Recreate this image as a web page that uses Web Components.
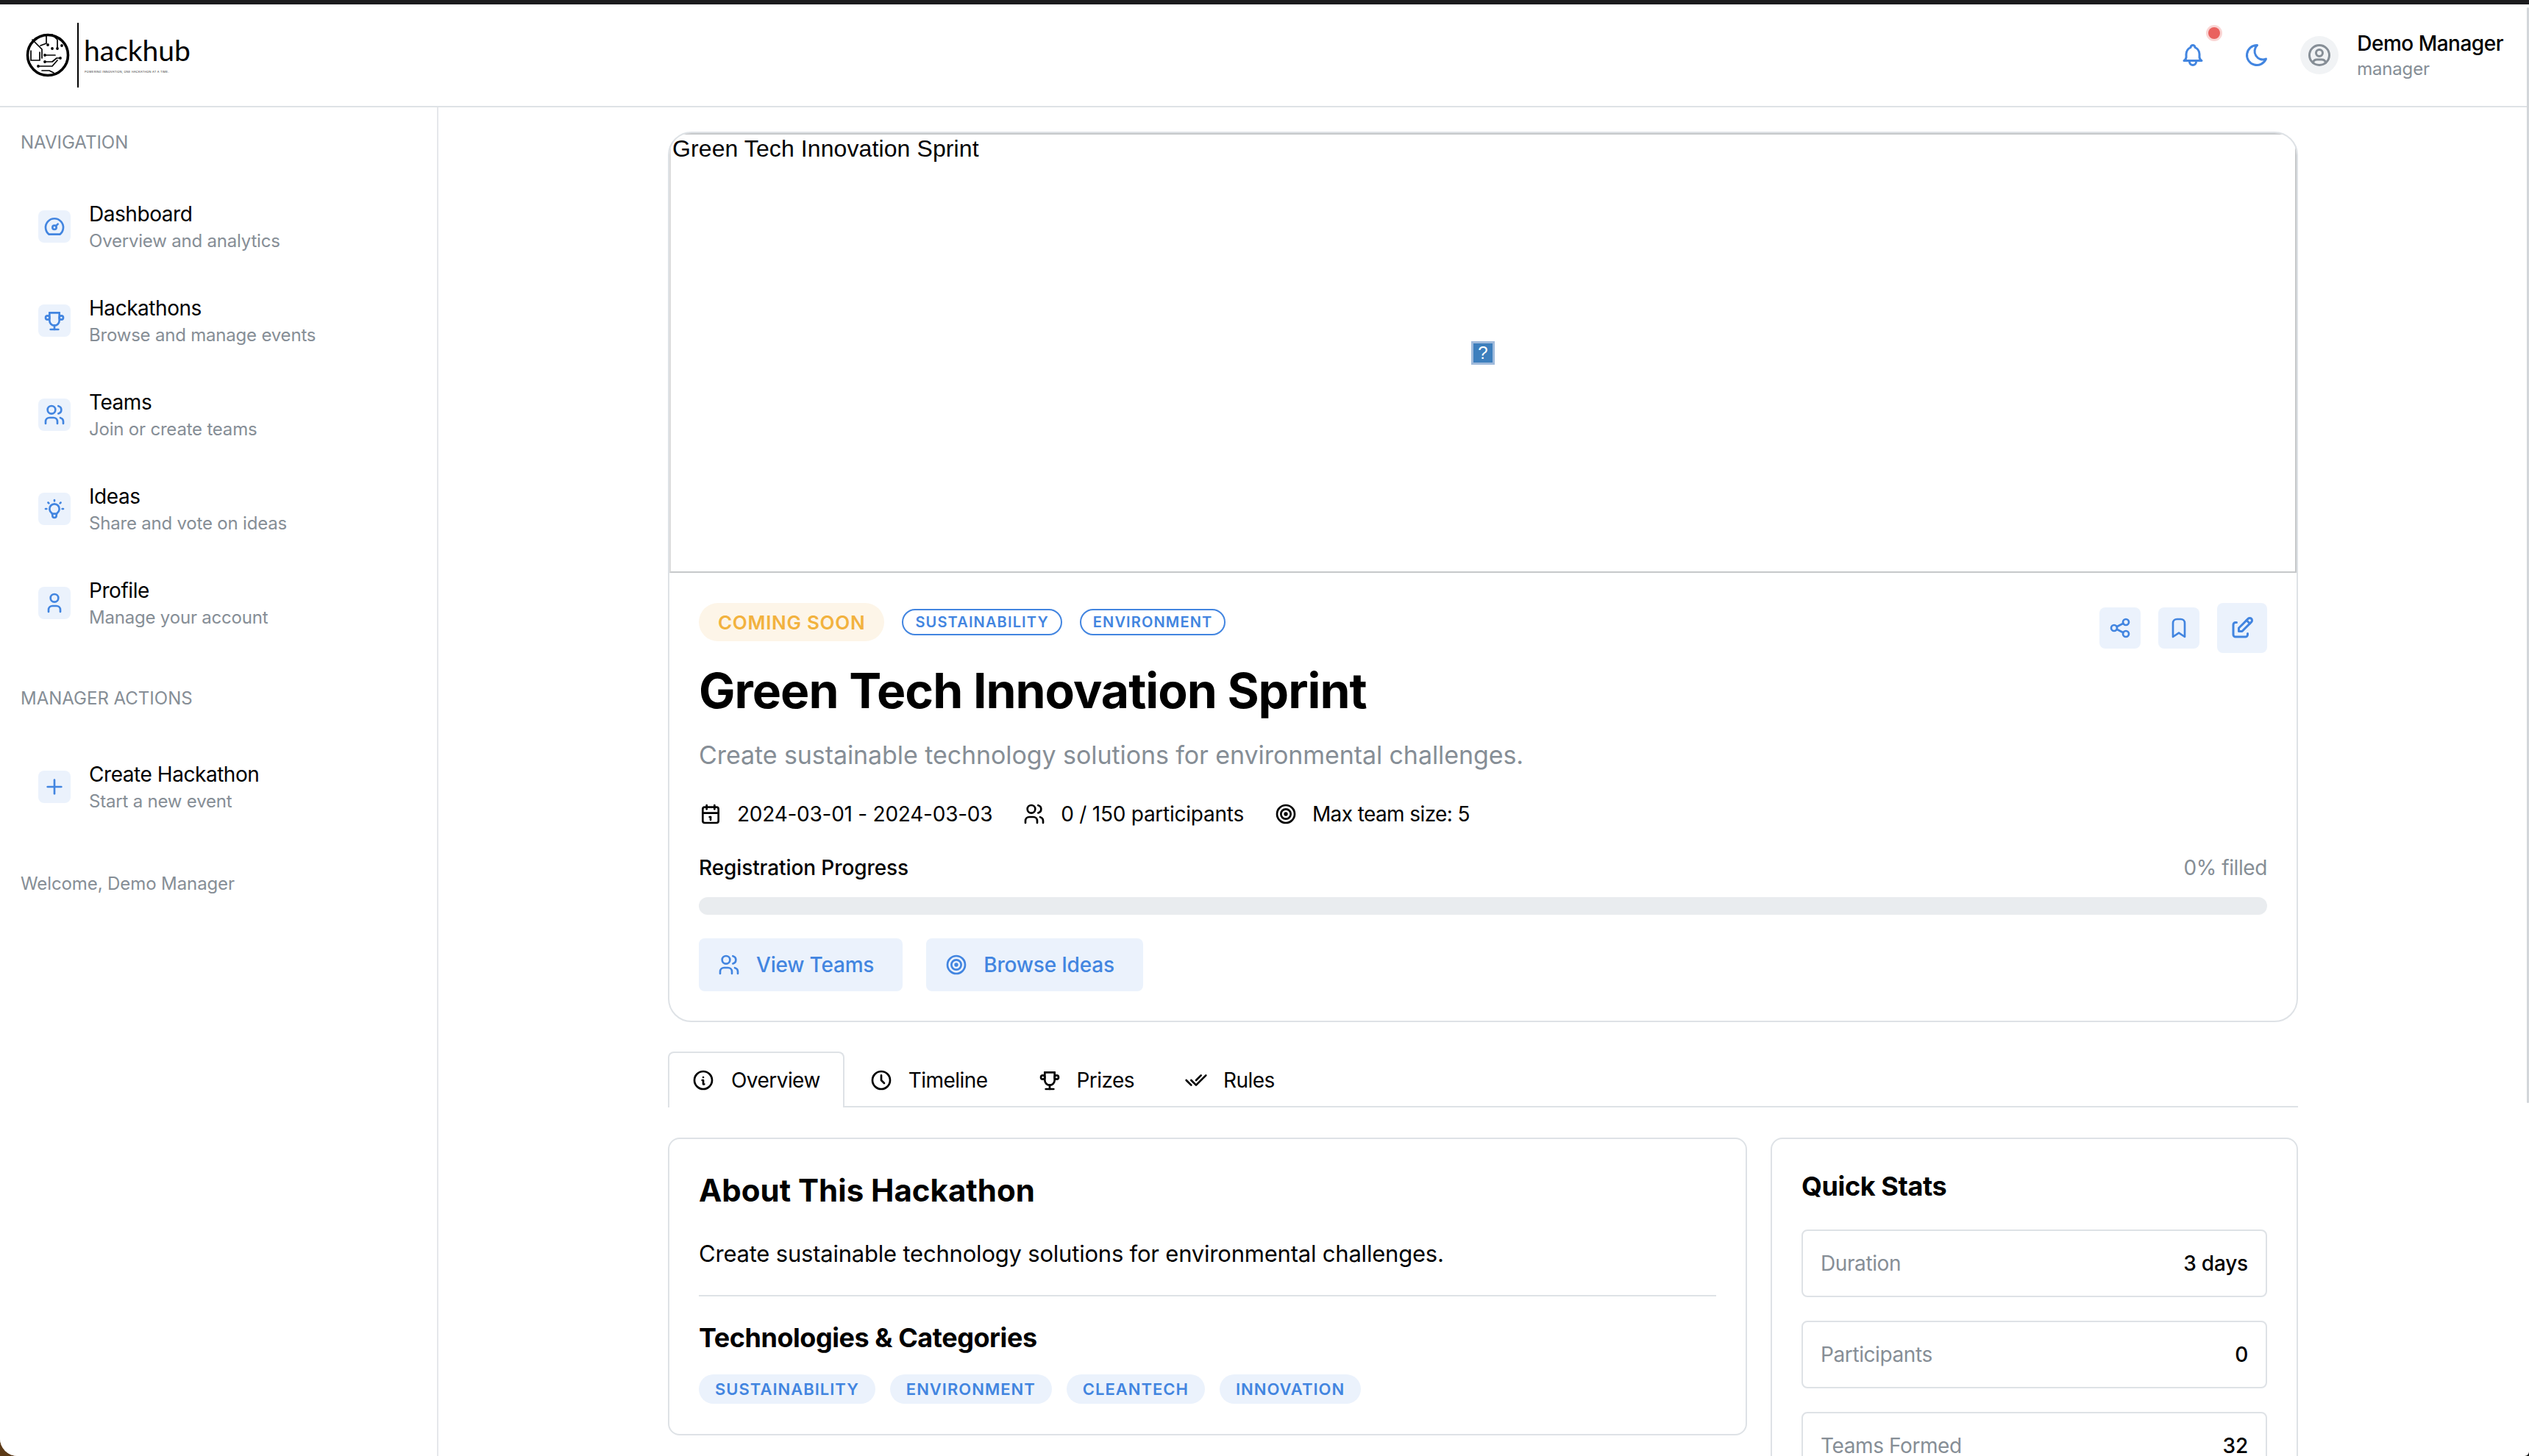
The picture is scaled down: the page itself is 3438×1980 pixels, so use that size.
<!DOCTYPE html>
<html lang="en">
<head>
<meta charset="utf-8">
<title>Green Tech Innovation Sprint</title>
<style>
html, body { margin: 0; height: 100%; overflow: hidden; background: linear-gradient(to right, #5c3a17 50%, #111 50%); }
body { font-family: Inter, "Liberation Sans", sans-serif; color: #000; }
</style>
</head>
<body>
<hack-app></hack-app>
<script>
const ICONS = {
	dashboard: ['M12 13m-2 0a2 2 0 1 0 4 0a2 2 0 1 0 -4 0', 'M13.45 11.55l2.05 -2.05', 'M6.4 20a9 9 0 1 1 11.2 0z'],
	trophy: ['M8 21l8 0', 'M12 17l0 4', 'M7 4l10 0', 'M17 4v8a5 5 0 0 1 -10 0v-8', 'M5 9m-2 0a2 2 0 1 0 4 0a2 2 0 1 0 -4 0', 'M19 9m-2 0a2 2 0 1 0 4 0a2 2 0 1 0 -4 0'],
	users: ['M9 7m-4 0a4 4 0 1 0 8 0a4 4 0 1 0 -8 0', 'M3 21v-2a4 4 0 0 1 4 -4h4a4 4 0 0 1 4 4v2', 'M16 3.13a4 4 0 0 1 0 7.75', 'M21 21v-2a4 4 0 0 0 -3 -3.85'],
	bulb: ['M3 12h1m8 -9v1m8 8h1m-15.4 -6.4l.7 .7m12.1 -.7l-.7 .7', 'M9 16a5 5 0 1 1 6 0a3.5 3.5 0 0 0 -1 3a2 2 0 0 1 -4 0a3.5 3.5 0 0 0 -1 -3', 'M9.7 17l4.6 0'],
	user: ['M8 7a4 4 0 1 0 8 0a4 4 0 0 0 -8 0', 'M6 21v-2a4 4 0 0 1 4 -4h4a4 4 0 0 1 4 4v2'],
	plus: ['M12 5l0 14', 'M5 12l14 0'],
	bell: ['M10 5a2 2 0 1 1 4 0a7 7 0 0 1 4 6v3a4 4 0 0 0 2 3h-16a4 4 0 0 0 2 -3v-3a7 7 0 0 1 4 -6', 'M9 17v1a3 3 0 0 0 6 0v-1'],
	moon: ['M12 3c.132 0 .263 0 .393 0a7.5 7.5 0 0 0 7.92 12.446a9 9 0 1 1 -8.313 -12.454z'],
	avatar: ['M12 12m-9 0a9 9 0 1 0 18 0a9 9 0 1 0 -18 0', 'M12 10m-3 0a3 3 0 1 0 6 0a3 3 0 1 0 -6 0', 'M6.168 18.849a4 4 0 0 1 3.832 -2.849h4a4 4 0 0 1 3.834 2.855'],
	share: ['M6 12m-3 0a3 3 0 1 0 6 0a3 3 0 1 0 -6 0', 'M18 6m-3 0a3 3 0 1 0 6 0a3 3 0 1 0 -6 0', 'M18 18m-3 0a3 3 0 1 0 6 0a3 3 0 1 0 -6 0', 'M8.7 10.7l6.6 -3.4', 'M8.7 13.3l6.6 3.4'],
	bookmark: ['M18 7v14l-6 -4l-6 4v-14a4 4 0 0 1 4 -4h4a4 4 0 0 1 4 4z'],
	edit: ['M7 7h-1a2 2 0 0 0 -2 2v9a2 2 0 0 0 2 2h9a2 2 0 0 0 2 -2v-1', 'M20.385 6.585a2.1 2.1 0 0 0 -2.97 -2.97l-8.415 8.385v3h3l8.385 -8.415z', 'M16 5l3 3'],
	calendar: ['M4 5m0 2a2 2 0 0 1 2 -2h12a2 2 0 0 1 2 2v12a2 2 0 0 1 -2 2h-12a2 2 0 0 1 -2 -2z', 'M16 3l0 4', 'M8 3l0 4', 'M4 11l16 0', 'M11 15h1', 'M12 15v3'],
	target: ['M12 12m-1 0a1 1 0 1 0 2 0a1 1 0 1 0 -2 0', 'M12 12m-5 0a5 5 0 1 0 10 0a5 5 0 1 0 -10 0', 'M12 12m-9 0a9 9 0 1 0 18 0a9 9 0 1 0 -18 0'],
	info: ['M3 12a9 9 0 1 0 18 0a9 9 0 0 0 -18 0', 'M12 9h.01', 'M11 12h1v4h1'],
	clock: ['M3 12a9 9 0 1 0 18 0a9 9 0 0 0 -18 0', 'M12 7v5l3 3'],
	checks: ['M7 12l5 5l10 -10', 'M2 12l5 5m5 -5l5 -5']
};

class XIcon extends HTMLElement {
	connectedCallback() {
		const size = this.getAttribute('size') || 32;
		const paths = (ICONS[this.getAttribute('name')] || []).map(d => `<path d="${d}"/>`).join('');
		this.attachShadow({ mode: 'open' }).innerHTML = `
		<style>
		:host{ display:inline-flex; flex:none; width:${size}px; height:${size}px; }
		svg{ width:100%; height:100%; fill:none; stroke:currentColor; stroke-width:2; stroke-linecap:round; stroke-linejoin:round; }
		</style>
		<svg viewBox="0 0 24 24">${paths}</svg>`;
	}
}
customElements.define('x-icon', XIcon);

class HackLogo extends HTMLElement {
	constructor() {
		super();
		this.attachShadow({ mode: 'open' }).innerHTML = `
		<style>
		:host{ display:flex; align-items:center; }
		svg{ width:60px; height:60px; flex:none; }
		.bar{ width:2px; height:88px; background:#000; margin:0 8px 0 10px; }
		.name{ font:400 39px/40px Lato, sans-serif; color:#000; margin-left:-1px; }
		.tag{ font:400 3.9px/8px Inter, sans-serif; letter-spacing:.25px; color:#333; margin-top:6px; white-space:nowrap; }
		</style>
		<svg viewBox="0 0 60 60" fill="none" stroke="#000" stroke-width="1.7" stroke-linecap="round" stroke-linejoin="round">
			<circle cx="30" cy="30" r="27.5" stroke-width="3.6"/>
			<path d="M9 9l13 13v12"/>
			<path d="M28 3v11l-8 3"/>
			<path d="M7 24v13h12V26"/>
			<path d="M26 30h14"/>
			<path d="M36 2l7 7v12"/>
			<path d="M47 34h-5l-6 5H26"/>
			<path d="M17 45h19l7-8"/>
			<path d="M22 51h10l6 3"/>
			<g fill="#000" stroke="none">
				<circle cx="30" cy="16" r="1.9"/><circle cx="36" cy="21" r="1.9"/><circle cx="49" cy="17" r="1.9"/>
				<circle cx="26" cy="30" r="1.9"/><circle cx="47" cy="34" r="1.9"/><circle cx="26" cy="39" r="1.9"/>
				<circle cx="17" cy="45" r="1.9"/><circle cx="43" cy="21" r="1.9"/>
			</g>
		</svg>
		<div class="bar"></div>
		<div>
			<div class="name">hackhub</div>
			<div class="tag">POWERING INNOVATION, ONE HACKATHON AT A TIME.</div>
		</div>`;
	}
}
customElements.define('hack-logo', HackLogo);

class HackHeader extends HTMLElement {
	static get styles() {
		return `
		<style>
		:host{ display:flex; align-items:center; justify-content:space-between; height:138px; padding:0 35px 0 35px; border-bottom:2px solid #dee2e6; background:#fff; flex:none; }
		.right{ display:flex; align-items:center; }
		.btn{ position:relative; width:56px; height:56px; display:flex; align-items:center; justify-content:center; color:#4285e0; margin-right:31px; }
		.dot{ position:absolute; left:49px; top:-10px; width:16px; height:16px; border-radius:50%; background:#e9615e; box-shadow:0 0 0 3px #f9d5d4; }
		.avatar{ width:52px; height:52px; border-radius:50%; background:#f1f3f5; color:#868e96; display:flex; align-items:center; justify-content:center; margin-right:25px; }
		.name{ font-size:28px; line-height:36px; font-weight:500; letter-spacing:-.5px; white-space:nowrap; }
		.role{ font-size:24px; line-height:32px; color:#868e96; margin-top:1px; letter-spacing:-.2px; }
		</style>`;
	}
	static get markup() {
		return `
		<hack-logo></hack-logo>
		<div class="right">
			<div class="btn"><x-icon name="bell" size="36"></x-icon><span class="dot"></span></div>
			<div class="btn"><x-icon name="moon" size="36"></x-icon></div>
			<div class="avatar"><x-icon name="avatar" size="36"></x-icon></div>
			<div>
				<div class="name">Demo Manager</div>
				<div class="role">manager</div>
			</div>
		</div>`;
	}
	constructor() {
		super();
		const template = document.createElement('template');
		template.innerHTML = this.constructor.styles + this.constructor.markup;
		this.attachShadow({ mode: 'open' }).appendChild(template.content.cloneNode(true));
	}
}
customElements.define('hack-header', HackHeader);

class NavItem extends HTMLElement {
	connectedCallback() {
		this.attachShadow({ mode: 'open' }).innerHTML = `
		<style>
		:host{ display:flex; align-items:center; height:128px; padding-left:24px; gap:25px; }
		.icon{ width:44px; height:44px; border-radius:8px; background:#ebf2fc; color:#4285e0; display:flex; align-items:center; justify-content:center; flex:none; }
		.title{ font-size:28px; line-height:40px; letter-spacing:-.45px; }
		.sub{ font-size:24px; line-height:34px; color:#868e96; letter-spacing:-.2px; }
		</style>
		<div class="icon"><x-icon name="${this.getAttribute('icon')}" size="32"></x-icon></div>
		<div>
			<div class="title"><slot></slot></div>
			<div class="sub"><slot name="sub"></slot></div>
		</div>`;
	}
}
customElements.define('nav-item', NavItem);

class HackSidebar extends HTMLElement {
	constructor() {
		super();
		this.attachShadow({ mode: 'open' }).innerHTML = `
		<style>
		:host{ display:block; width:594px; flex:none; box-sizing:content-box; border-right:2px solid #e5e7eb; padding-top:34px; background:#fff; }
		.head{ font-size:24px; line-height:28px; color:#868e96; padding-left:28px; }
		.items{ padding-left:28px; margin-top:36px; }
		.mgr{ margin-top:52px; }
		.mgr + .items{ margin-top:42px; }
		.foot{ font-size:24px; line-height:28px; color:#868e96; padding-left:28px; margin-top:54px; letter-spacing:-.1px; }
		</style>
		<div class="head">NAVIGATION</div>
		<div class="items">
			<nav-item icon="dashboard">Dashboard<span slot="sub">Overview and analytics</span></nav-item>
			<nav-item icon="trophy">Hackathons<span slot="sub">Browse and manage events</span></nav-item>
			<nav-item icon="users">Teams<span slot="sub">Join or create teams</span></nav-item>
			<nav-item icon="bulb">Ideas<span slot="sub">Share and vote on ideas</span></nav-item>
			<nav-item icon="user">Profile<span slot="sub">Manage your account</span></nav-item>
		</div>
		<div class="head mgr">MANAGER ACTIONS</div>
		<div class="items">
			<nav-item icon="plus">Create Hackathon<span slot="sub">Start a new event</span></nav-item>
		</div>
		<div class="foot">Welcome, Demo Manager</div>`;
	}
}
customElements.define('hack-sidebar', HackSidebar);

class TagPill extends HTMLElement {
	constructor() {
		super();
		this.attachShadow({ mode: 'open' }).innerHTML = `
		<style>
		:host{ display:inline-flex; align-items:center; white-space:nowrap; box-sizing:border-box; border-radius:999px; font-weight:600; color:#4285e0; }
		:host([kind="status"]){ height:52px; padding:0 26px; background:#fdf5e8; color:#f2b23e; font-size:26px; letter-spacing:.7px; }
		:host([kind="outline"]){ height:36px; padding:0 16px; border:2px solid #4285e0; font-size:20px; letter-spacing:1.15px; }
		:host([kind="chip"]){ height:40px; padding:0 22px; background:#ebf2fc; font-size:22px; letter-spacing:1px; }
		</style>
		<slot></slot>`;
	}
}
customElements.define('tag-pill', TagPill);

class SoftButton extends HTMLElement {
	connectedCallback() {
		this.attachShadow({ mode: 'open' }).innerHTML = `
		<style>
		:host{ display:inline-flex; align-items:center; gap:21px; height:72px; padding:0 39px 0 25px; border-radius:8px; background:#ebf2fc; color:#4285e0; font-size:28px; font-weight:500; letter-spacing:-.2px; }
		</style>
		<x-icon name="${this.getAttribute('icon')}" size="32"></x-icon><slot></slot>`;
	}
}
customElements.define('soft-button', SoftButton);

class IconButton extends HTMLElement {
	connectedCallback() {
		const box = this.getAttribute('box') || 56;
		const size = this.getAttribute('size') || 32;
		this.attachShadow({ mode: 'open' }).innerHTML = `
		<style>
		:host{ display:flex; align-items:center; justify-content:center; width:${box}px; height:${box}px; border-radius:8px; background:#ebf2fc; color:#4285e0; flex:none; }
		</style>
		<x-icon name="${this.getAttribute('icon')}" size="${size}"></x-icon>`;
	}
}
customElements.define('icon-button', IconButton);

class MetaItem extends HTMLElement {
	connectedCallback() {
		this.attachShadow({ mode: 'open' }).innerHTML = `
		<style>
		:host{ display:inline-flex; align-items:center; gap:20px; font-size:28px; line-height:36px; letter-spacing:-.25px; }
		</style>
		<x-icon name="${this.getAttribute('icon')}" size="32"></x-icon><slot></slot>`;
	}
}
customElements.define('meta-item', MetaItem);

class HeroCard extends HTMLElement {
	static get styles() {
		return `
		<style>
		:host{ display:block; box-sizing:border-box; border:2px solid #dee2e6; border-radius:32px; overflow:hidden; background:#fff; }
		.image{ position:relative; box-sizing:border-box; height:598px; border:2px solid #c6c8ca; border-left-color:#dcdcdc; font:32px/38px "Liberation Sans", sans-serif; letter-spacing:.1px; padding:0 2px; }
		.broken{ position:absolute; left:50%; top:50%; width:32px; height:32px; margin:-16px 0 0 -16px; box-sizing:border-box; border:3px solid #9fbadb; background:#3d7fbd; color:#fff; font:400 24px/26px "Liberation Sans", sans-serif; text-align:center; }
		.body{ padding:41px 40px 40px; }
		.top{ display:flex; justify-content:space-between; height:68px; }
		.tags{ display:flex; gap:24px; align-items:center; height:52px; }
		.actions{ display:flex; align-items:center; gap:24px; }
		h1{ margin:11px 0 0; font-size:66px; line-height:80px; font-weight:700; letter-spacing:-1px; }
		.desc{ margin-top:23px; font-size:34px; line-height:50px; color:#868e96; letter-spacing:-.08px; }
		.meta{ margin-top:37px; display:flex; gap:41px; }
		.tight{ letter-spacing:-.6px; }
		.progress{ margin-top:37px; display:flex; justify-content:space-between; font-size:28px; line-height:36px; font-weight:500; letter-spacing:-.1px; }
		.progress span:last-child{ font-weight:400; color:#868e96; letter-spacing:-.4px; }
		.bar{ margin-top:22px; height:24px; border-radius:12px; background:#e9ecef; }
		.buttons{ margin-top:32px; display:flex; gap:32px; }
		</style>`;
	}
	static get markup() {
		return `
		<div class="image">Green Tech Innovation Sprint<span class="broken">?</span></div>
		<div class="body">
			<div class="top">
				<div class="tags">
					<tag-pill kind="status">COMING SOON</tag-pill>
					<tag-pill kind="outline">SUSTAINABILITY</tag-pill>
					<tag-pill kind="outline">ENVIRONMENT</tag-pill>
				</div>
				<div class="actions">
					<icon-button icon="share"></icon-button>
					<icon-button icon="bookmark"></icon-button>
					<icon-button icon="edit" box="68" size="36"></icon-button>
				</div>
			</div>
			<h1>Green Tech Innovation Sprint</h1>
			<div class="desc">Create sustainable technology solutions for environmental challenges.</div>
			<div class="meta">
				<meta-item icon="calendar">2024-03-01 - 2024-03-03</meta-item>
				<meta-item icon="users">0 / 150 participants</meta-item>
				<meta-item icon="target" class="tight">Max team size: 5</meta-item>
			</div>
			<div class="progress"><span>Registration Progress</span><span>0% filled</span></div>
			<div class="bar"></div>
			<div class="buttons">
				<soft-button icon="users">View Teams</soft-button>
				<soft-button icon="target">Browse Ideas</soft-button>
			</div>
		</div>`;
	}
	constructor() {
		super();
		const template = document.createElement('template');
		template.innerHTML = this.constructor.styles + this.constructor.markup;
		this.attachShadow({ mode: 'open' }).appendChild(template.content.cloneNode(true));
	}
}
customElements.define('hero-card', HeroCard);

class TabItem extends HTMLElement {
	connectedCallback() {
		this.attachShadow({ mode: 'open' }).innerHTML = `
		<style>
		:host{ display:flex; align-items:center; gap:21px; box-sizing:border-box; height:76px; padding:0 32px; border:2px solid transparent; border-bottom:0; border-radius:8px 8px 0 0; font-size:28px; letter-spacing:-.55px; }
		:host([active]){ border-color:#dee2e6; background:#fff; padding:0 31px 0 30px; gap:22px; }
		</style>
		<x-icon name="${this.getAttribute('icon')}" size="32"></x-icon><slot></slot>`;
	}
}
customElements.define('tab-item', TabItem);

class TabBar extends HTMLElement {
	constructor() {
		super();
		this.attachShadow({ mode: 'open' }).innerHTML = `
		<style>
		:host{ display:block; margin-top:40px; }
		.tabs{ display:flex; position:relative; z-index:1; }
		.line{ height:2px; background:#dee2e6; margin-top:-2px; }
		</style>
		<div class="tabs"><slot></slot></div>
		<div class="line"></div>`;
	}
}
customElements.define('tab-bar', TabBar);

class StatRow extends HTMLElement {
	constructor() {
		super();
		this.attachShadow({ mode: 'open' }).innerHTML = `
		<style>
		:host{ display:flex; align-items:center; justify-content:space-between; box-sizing:border-box; height:92px; padding:0 24px; border:2px solid #dee2e6; border-radius:8px; font-size:28px; font-weight:500; letter-spacing:-.2px; }
		.label{ color:#868e96; font-weight:400; letter-spacing:-.4px; }
		</style>
		<span class="label"><slot name="label"></slot></span><slot></slot>`;
	}
}
customElements.define('stat-row', StatRow);

class AboutCard extends HTMLElement {
	constructor() {
		super();
		this.attachShadow({ mode: 'open' }).innerHTML = `
		<style>
		:host{ display:block; box-sizing:border-box; height:405px; padding:42px 40px 0; border:2px solid #dee2e6; border-radius:16px; background:#fff; }
		h2{ margin:0; font-size:42px; line-height:56px; font-weight:700; }
		p{ margin:36px 0 0; font-size:31px; line-height:44px; letter-spacing:-.21px; }
		hr{ border:0; height:2px; background:#dee2e6; margin:34px 0 0; }
		h3{ margin:34px 0 0; font-size:36px; line-height:44px; font-weight:700; letter-spacing:-.45px; }
		.chips{ display:flex; gap:20px; margin-top:28px; }
		</style>
		<h2>About This Hackathon</h2>
		<p>Create sustainable technology solutions for environmental challenges.</p>
		<hr>
		<h3>Technologies &amp; Categories</h3>
		<div class="chips">
			<tag-pill kind="chip">SUSTAINABILITY</tag-pill>
			<tag-pill kind="chip">ENVIRONMENT</tag-pill>
			<tag-pill kind="chip">CLEANTECH</tag-pill>
			<tag-pill kind="chip">INNOVATION</tag-pill>
		</div>`;
	}
}
customElements.define('about-card', AboutCard);

class StatsCard extends HTMLElement {
	constructor() {
		super();
		this.attachShadow({ mode: 'open' }).innerHTML = `
		<style>
		:host{ display:block; box-sizing:border-box; padding:42px 40px 40px; border:2px solid #dee2e6; border-radius:16px; background:#fff; }
		h3{ margin:0 0 37px; font-size:36px; line-height:44px; font-weight:700; letter-spacing:-.4px; }
		.rows{ display:flex; flex-direction:column; gap:32px; }
		</style>
		<h3>Quick Stats</h3>
		<div class="rows">
			<stat-row><span slot="label">Duration</span>3 days</stat-row>
			<stat-row><span slot="label">Participants</span>0</stat-row>
			<stat-row><span slot="label">Teams Formed</span>32</stat-row>
		</div>`;
	}
}
customElements.define('stats-card', StatsCard);

class HackApp extends HTMLElement {
	static get styles() {
		return `
		<style>
		:host{ display:flex; flex-direction:column; position:relative; width:100vw; height:100vh; overflow:hidden; box-sizing:border-box; border-top:6px solid #1c1c1e; background:#fff; border-radius:0 0 6px 24px; }
		.shell{ display:flex; flex:1; min-height:0; }
		.main{ flex:1; min-width:0; padding:33px 2px 0 0; }
		.content{ width:2216px; margin:0 auto; }
		.grid{ display:grid; grid-template-columns:1fr 717px; gap:32px; margin-top:41px; align-items:start; }
		.thumb{ position:absolute; right:0; top:4px; width:3px; height:1490px; border-radius:2px; background:#d3d6da; }
		</style>`;
	}
	static get markup() {
		return `
		<hack-header></hack-header>
		<div class="shell">
			<hack-sidebar></hack-sidebar>
			<div class="main">
				<div class="content">
					<hero-card></hero-card>
					<tab-bar>
						<tab-item icon="info" active>Overview</tab-item>
						<tab-item icon="clock">Timeline</tab-item>
						<tab-item icon="trophy">Prizes</tab-item>
						<tab-item icon="checks">Rules</tab-item>
					</tab-bar>
					<div class="grid">
						<about-card></about-card>
						<stats-card></stats-card>
					</div>
				</div>
			</div>
		</div>
		<div class="thumb"></div>`;
	}
	constructor() {
		super();
		const template = document.createElement('template');
		template.innerHTML = this.constructor.styles + this.constructor.markup;
		this.attachShadow({ mode: 'open' }).appendChild(template.content.cloneNode(true));
	}
}
customElements.define('hack-app', HackApp);
</script>
</body>
</html>
